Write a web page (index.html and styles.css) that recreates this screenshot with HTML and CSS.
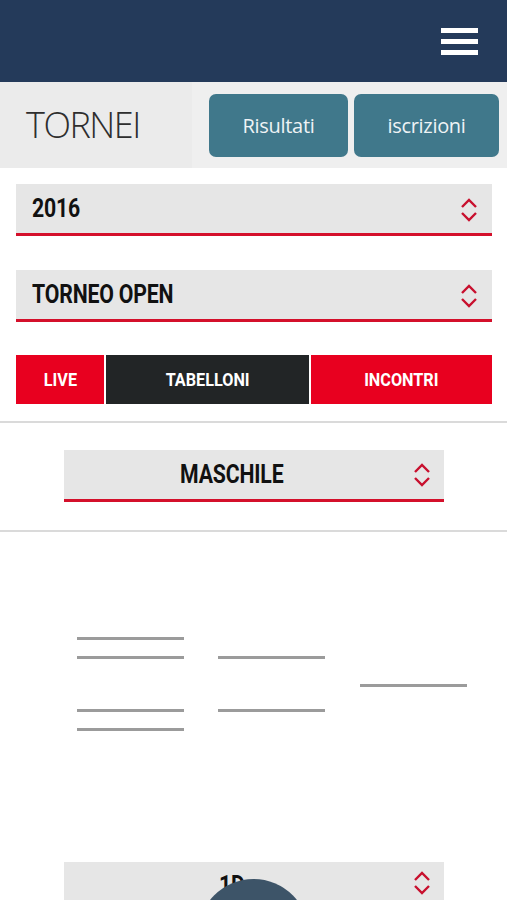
FILE: index.html
```html
<!DOCTYPE html>
<html>
<head>
<meta charset="utf-8">
<meta name="viewport" content="width=device-width, user-scalable=no">
<title>Tornei</title>
<link rel="stylesheet" href="styles.css">
</head>
<body>
<div id="topbar">
  <a href="#" class="burger"><span></span><span></span><span></span></a>
</div>
<div id="subbar">
  <div class="title">TORNEI</div>
  <div class="buttons">
    <a href="#" class="btn">Risultati</a>
    <a href="#" class="btn">iscrizioni</a>
  </div>
</div>

<div class="content">
  <div class="select first">
    <span class="label">2016</span>
    <svg class="chev" width="16" height="24" viewBox="0 0 16 24"><polyline points="1,9 8,2 15,9"/><polyline points="1,15 8,22 15,15"/></svg>
  </div>
  <div class="select">
    <span class="label">TORNEO OPEN</span>
    <svg class="chev" width="16" height="24" viewBox="0 0 16 24"><polyline points="1,9 8,2 15,9"/><polyline points="1,15 8,22 15,15"/></svg>
  </div>
  <nav class="tabs">
    <a href="#" class="tab live"><span>LIVE</span></a>
    <a href="#" class="tab active"><span>TABELLONI</span></a>
    <a href="#" class="tab incontri"><span>INCONTRI</span></a>
  </nav>
</div>

<div class="divider"></div>
<div class="center-wrap">
  <div class="select small">
    <span class="label">MASCHILE</span>
    <svg class="chev" width="16" height="24" viewBox="0 0 16 24"><polyline points="1,9 8,2 15,9"/><polyline points="1,15 8,22 15,15"/></svg>
  </div>
</div>
<div class="divider"></div>

<div class="bracket">
  <div class="line" style="left:77px; top:105px"></div>
  <div class="line" style="left:77px; top:124px"></div>
  <div class="line" style="left:77px; top:177px"></div>
  <div class="line" style="left:77px; top:196px"></div>
  <div class="line" style="left:218px; top:124px"></div>
  <div class="line" style="left:218px; top:177px"></div>
  <div class="line" style="left:360px; top:152px"></div>
</div>

<div class="center-wrap">
  <div class="select small bottom">
    <span class="label">1D</span>
    <svg class="chev" width="16" height="24" viewBox="0 0 16 24"><polyline points="1,9 8,2 15,9"/><polyline points="1,15 8,22 15,15"/></svg>
  </div>
</div>
<div class="fab"></div>
</body>
</html>
```
FILE: styles.css
```css
body {
    margin: 0;
    padding: 0;
    background: #fff;
    font-family: Roboto, "Noto Sans", sans-serif;
    width: 507px;
    height: 900px;
    overflow: hidden;
    position: relative;
}
a { text-decoration: none; }

#topbar {
    height: 82px;
    background: #243a5a;
    display: flex;
    justify-content: flex-end;
    align-items: flex-start;
}
.burger {
    display: flex;
    flex-direction: column;
    gap: 6px;
    margin: 28px 29px 0 0;
}
.burger span {
    display: block;
    width: 37px;
    height: 5px;
    background: #fff;
}

#subbar {
    height: 86px;
    background: #efefef;
    display: flex;
    align-items: center;
}
#subbar .title {
    width: 192px;
    height: 86px;
    background: #ebebeb;
    font-family: "Open Sans", sans-serif;
    font-weight: 300;
    font-size: 36px;
    letter-spacing: -1.5px;
    color: #2e2e2e;
    line-height: 86px;
    padding-left: 26px;
    box-sizing: border-box;
}
#subbar .buttons {
    display: flex;
    gap: 6px;
    margin-left: 17px;
}
.btn {
    display: flex;
    align-items: center;
    justify-content: center;
    height: 63px;
    border-radius: 7px;
    background: #40788b;
    color: #eef3f5;
    font-family: "Open Sans", sans-serif;
    font-size: 20px;
    letter-spacing: -0.3px;
}
.btn:first-child { width: 139px; }
.btn:last-child { width: 145px; }

.content {
    padding: 16px 15px 0 16px;
}
.select {
    height: 49px;
    background: #e6e6e6;
    border-bottom: 3px solid #d4102b;
    display: flex;
    align-items: center;
    justify-content: space-between;
    padding: 0 15px 0 16px;
    margin-bottom: 34px;
}
.select .label {
    display: inline-block;
    font-weight: 700;
    font-size: 25px;
    color: #111;
    transform: scaleX(0.85);
    transform-origin: left center;
    letter-spacing: -0.2px;
}
.chev {
    display: block;
    margin-top: 2px;
}
.chev polyline {
    fill: none;
    stroke: #c8102e;
    stroke-width: 2.4;
}

.tabs {
    display: flex;
    gap: 2px;
    height: 49px;
    margin-top: -1px;
}
.tab {
    display: flex;
    align-items: center;
    justify-content: center;
    background: #e8001f;
    color: #fff;
    font-weight: 700;
    font-size: 18px;
}
.tab span {
    display: inline-block;
    transform: scaleX(0.9);
}
.tab.live { width: 88px; }
.tab.active { width: 203px; background: #222526; }
.tab.incontri { flex: 1; }

.divider {
    height: 2px;
    background: #dadada;
}
.content + .divider { margin-top: 17px; }

.center-wrap {
    padding: 27px 63px 28px 64px;
}
.select.small {
    margin: 0;
    padding: 0 14px 0 0;
}
.select.small .label {
    flex: 1;
    text-align: center;
    transform-origin: center;
    padding-right: 17px;
}
.select.small .chev { margin-top: 0; }

.bracket {
    height: 330px;
    position: relative;
}
.bracket .line {
    position: absolute;
    width: 107px;
    height: 3px;
    background: #9b9b9b;
}

.bracket + .center-wrap { padding-top: 0; }
.select.bottom {
    height: 60px;
    align-items: flex-start;
    padding-top: 9px;
    border-bottom: none;
}

.fab {
    position: absolute;
    left: 198px;
    top: 879px;
    width: 111px;
    height: 111px;
    border-radius: 50%;
    background: #3d5468;
}
```
